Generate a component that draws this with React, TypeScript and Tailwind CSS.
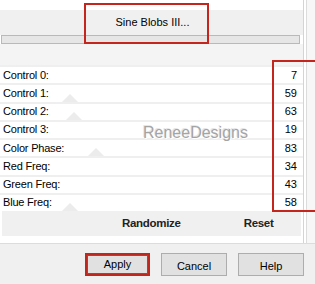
import React from "react";

const rows: { label: string; value: string; thumb?: number }[] = [
  { label: "Control 0:", value: "7" },
  { label: "Control 1:", value: "59", thumb: 62 },
  { label: "Control 2:", value: "63", thumb: 66 },
  { label: "Control 3:", value: "19" },
  { label: "Color Phase:", value: "83", thumb: 88 },
  { label: "Red Freq:", value: "34" },
  { label: "Green Freq:", value: "43" },
  { label: "Blue Freq:", value: "58", thumb: 62 },
];

function Row({ label, value, thumb }: { label: string; value: string; thumb?: number }) {
  return (
    <div className="relative h-[18.25px] bg-white border-t-2 border-[#efefef] flex items-center justify-between pl-[3px] pr-[6px]">
      {thumb !== undefined && (
        <div
          className="absolute bottom-0 w-0 h-0 border-l-[8px] border-r-[8px] border-b-[8px] border-l-transparent border-r-transparent border-b-[#ececec]"
          style={{ left: thumb }}
        />
      )}
      <span className="relative text-[11px] leading-none text-black tracking-[-0.2px]">{label}</span>
      <span className="relative text-[11px] leading-none text-black">{value}</span>
    </div>
  );
}

function Btn({ children, active }: { children: React.ReactNode; active?: boolean }) {
  return (
    <div
      className={
        active
          ? "w-[65px] h-[23px] border-2 border-[#c0281e] bg-[#e1e1e1] flex items-center justify-center"
          : "w-[66px] h-[23px] border border-[#adadad] bg-[#e1e1e1] flex items-center justify-center"
      }
    >
      <div className={active ? "w-full h-full border border-[#0078d7] flex items-center justify-center" : ""}>
        <span className="text-[11px] text-black">{children}</span>
      </div>
    </div>
  );
}

export default function App() {
  return (
    <div
      className="relative w-[315px] h-[284px] overflow-hidden bg-white flex flex-col"
      style={{ fontFamily: '"Liberation Sans", Arial, sans-serif' }}
    >
      <div className="flex h-[243px]">
        <div className="w-[303px] flex flex-col">
          <div className="h-[10px] bg-white" />
          <div className="h-[25px] bg-[#f0f0f0] flex items-center justify-center">
            <span className="text-[11px] text-black pl-[2px]">Sine Blobs III...</span>
          </div>
          <div className="h-[9px] w-[299px] ml-[1px] border border-[#b9b9b9] bg-[#e6e6e6]" />
          <div className="h-[21px] bg-[#f4f4f4]" />
          {rows.map((r) => (
            <Row key={r.label} {...r} />
          ))}
          <div className="h-[25px] mx-[2px] bg-[#f0f0f0] flex items-center">
            <span className="ml-[120px] text-[11.5px] font-bold text-[#222] tracking-[-0.3px]">Randomize</span>
            <span className="ml-[63px] text-[11.5px] font-bold text-[#222] tracking-[-0.3px]">Reset</span>
          </div>
          <div className="flex-1 bg-white" />
        </div>
        <div className="w-[12px] flex">
          <div className="w-[3px] border-l border-[#d4d4d4] bg-white" />
          <div className="flex-1 border-l border-[#dcdcdc] bg-[#f7f7f7]" />
        </div>
      </div>
      <div className="flex-1 bg-[#f0f0f0] border-t border-[#dcdcdc] flex items-start pt-[9px] pl-[85px] gap-[11px]">
        <Btn active>Apply</Btn>
        <Btn>Cancel</Btn>
        <Btn>Help</Btn>
      </div>

      {/* watermark */}
      <div
        className="absolute left-[143px] top-[121px] text-[16px] text-[#a4a4a4]"
        style={{ textShadow: "1px 1px 0 #ffffff, -1px -1px 0 #e6e6e6" }}
      >
        ReneeDesigns
      </div>

      {/* annotation boxes */}
      <div className="absolute left-[84px] top-[3px] w-[125px] h-[41px] border-2 border-[#c4261d]" />
      <div className="absolute left-[272px] top-[60px] w-[45px] h-[152px] border-2 border-[#c4261d]" />
    </div>
  );
}
